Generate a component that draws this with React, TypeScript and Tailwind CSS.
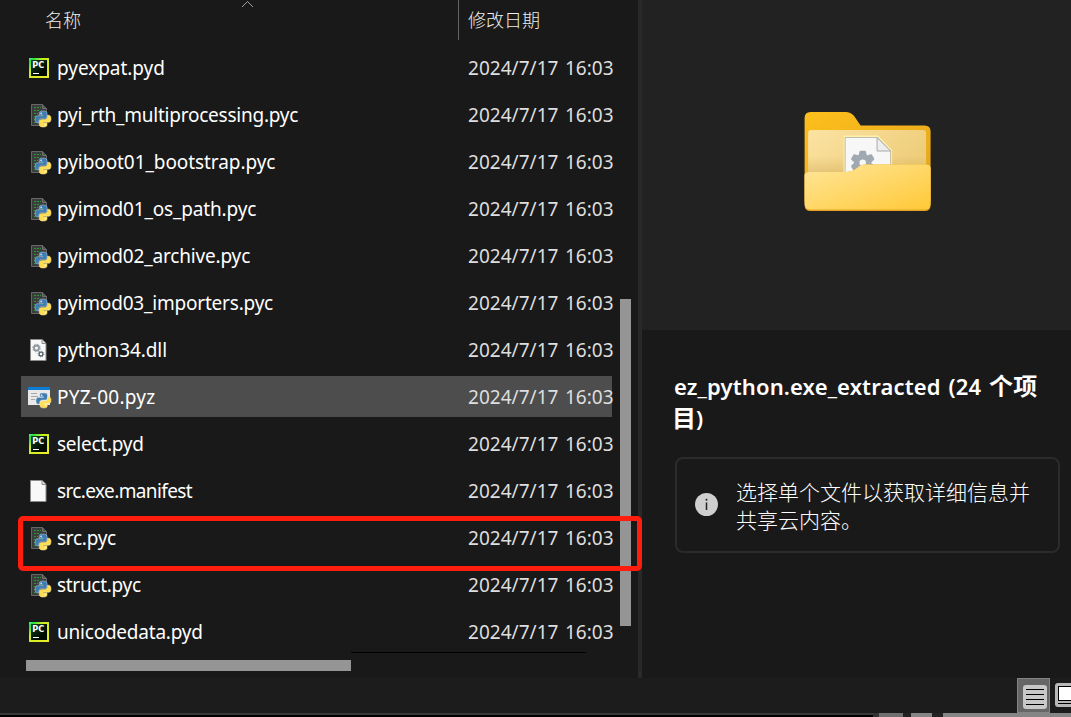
import React from "react";

type Kind = "pyd" | "pyc" | "dll" | "pyz" | "file";

const files: { name: string; kind: Kind; tracking: string }[] = [
  { name: "pyexpat.pyd", kind: "pyd", tracking: "tracking-[-0.05px]" },
  { name: "pyi_rth_multiprocessing.pyc", kind: "pyc", tracking: "tracking-[-0.24px]" },
  { name: "pyiboot01_bootstrap.pyc", kind: "pyc", tracking: "tracking-[-0.08px]" },
  { name: "pyimod01_os_path.pyc", kind: "pyc", tracking: "tracking-[-0.15px]" },
  { name: "pyimod02_archive.pyc", kind: "pyc", tracking: "tracking-[-0.17px]" },
  { name: "pyimod03_importers.pyc", kind: "pyc", tracking: "tracking-[-0.2px]" },
  { name: "python34.dll", kind: "dll", tracking: "tracking-[-0.1px]" },
  { name: "PYZ-00.pyz", kind: "pyz", tracking: "tracking-[0.25px]" },
  { name: "select.pyd", kind: "pyd", tracking: "tracking-[-0.25px]" },
  { name: "src.exe.manifest", kind: "file", tracking: "tracking-[-0.62px]" },
  { name: "src.pyc", kind: "pyc", tracking: "tracking-[-0.28px]" },
  { name: "struct.pyc", kind: "pyc", tracking: "tracking-[-0.3px]" },
  { name: "unicodedata.pyd", kind: "pyd", tracking: "tracking-[-0.22px]" },
];

function Snakes({ x, y, size }: { x: number; y: number; size: number }) {
  return (
    <g transform={`translate(${x} ${y}) scale(${size / 16})`}>
      <path
        d="M7.8 0C4.5 0 4.2 1.3 4.2 2.3V4H8v.7H2.4C1 4.7 0 6 0 8.2s1 3.6 2.3 3.6H4V9.9c0-1.5 1.2-2.5 2.5-2.5h3.5c1.3 0 2.1-.9 2.1-2.1V2.3C12.1.8 10.5 0 7.8 0Z"
        fill="#3f7cb0" stroke="#b9d2e6" strokeWidth=".5"
      />
      <path
        d="M8.4 16c3.3 0 3.6-1.3 3.6-2.3V12H8.2v-.7h5.6C15.2 11.3 16 10 16 7.8s-.8-3.6-2.1-3.6h-1.5v1.9c0 1.5-1.2 2.5-2.5 2.5H6.4c-1.3 0-2.1.9-2.1 2.1v3C4.3 15.2 5.7 16 8.4 16Z"
        fill="#ffdc50" stroke="#fff0a8" strokeWidth=".5"
      />
      <circle cx="6.1" cy="2.3" r=".8" fill="#fff" />
      <circle cx="10.1" cy="13.7" r=".8" fill="#fffbe0" />
    </g>
  );
}

function FileIcon({ kind }: { kind: Kind }) {
  if (kind === "pyd")
    return (
      <svg width="24" height="26" viewBox="0 0 24 26">
        <defs>
          <linearGradient id="pcEdge" x1="0" y1="0" x2="1" y2="1">
            <stop offset="0" stopColor="#50f5a0" />
            <stop offset=".12" stopColor="#20e040" />
            <stop offset=".35" stopColor="#c8ec20" />
            <stop offset="1" stopColor="#eeee28" />
          </linearGradient>
          <linearGradient id="pcFace" x1="0" y1="0" x2="1" y2="1">
            <stop offset="0" stopColor="#0c4520" />
            <stop offset=".7" stopColor="#020a04" />
          </linearGradient>
        </defs>
        <rect x="1" y="3" width="20" height="20" fill="url(#pcEdge)" />
        <rect x="3" y="5" width="16" height="16" fill="url(#pcFace)" />
        <text x="4.2" y="13.4" fontSize="8.5" fontWeight="700" fontFamily="DejaVu Sans" textLength="12" lengthAdjust="spacingAndGlyphs" fill="#fff">PC</text>
        <rect x="5" y="18" width="6" height="1" fill="#fff" />
      </svg>
    );
  if (kind === "pyc")
    return (
      <svg width="24" height="26" viewBox="0 0 24 26">
        <path d="M3.5 2.5h11l4 4v17h-15Z" fill="#3b3d3d" stroke="#666" />
        <path d="M14.5 2.5v4h4" fill="#555" stroke="#707070" />
        <path d="M6 5.5h7M6 8.5h6M6 11.5h4M6 14.5h2M6 17.5h3M6 20.5h4" stroke="#279a35" strokeDasharray="2 1" />
        <Snakes x={7} y={9} size={16} />
      </svg>
    );
  if (kind === "pyz")
    return (
      <svg width="24" height="26" viewBox="0 0 24 26">
        <rect x="0" y="3" width="22" height="18" fill="#e9e9e9" />
        <rect x="0" y="3" width="22" height="3" fill="#0b7dd2" />
        <path d="M3 9.5h6M3 12.5h7M3 15.5h4" stroke="#aaa" />
        <path d="M12 9.5h7" stroke="#aaa" />
        <Snakes x={8} y={9} size={15} />
      </svg>
    );
  return (
    <svg width="24" height="26" viewBox="0 0 24 26">
      <path d="M2.5 2.5h11.5l4 4v17h-15.5Z" fill="#f8f8f8" stroke="#8b8b8b" />
      <path d="M14 2.5v4h4" fill="#ddd" stroke="#8b8b8b" />
      {kind === "dll" && (
        <g fill="none">
          <circle cx="8.5" cy="11" r="2.5" stroke="#8e989f" strokeWidth="1.8" />
          <circle cx="8.5" cy="11" r="3.8" stroke="#8e989f" strokeDasharray="1.5 1.48" />
          <circle cx="13" cy="17" r="1.9" stroke="#56616b" strokeWidth="1.3" />
          <circle cx="13" cy="17" r="2.9" stroke="#56616b" strokeWidth=".8" strokeDasharray="1.1 1.18" />
        </g>
      )}
    </svg>
  );
}

function FolderIcon() {
  return (
    <svg width="128" height="102" viewBox="0.4 0 128 102">
      <defs>
        <linearGradient id="fBack" x1="0" y1="0" x2="1" y2="1">
          <stop offset="0" stopColor="#fdc01c" />
          <stop offset="1" stopColor="#e3a11b" />
        </linearGradient>
        <linearGradient id="fInner" x1="0" y1="0" x2="1" y2=".5">
          <stop offset="0" stopColor="#fce3a3" />
          <stop offset="1" stopColor="#edcd79" />
        </linearGradient>
        <linearGradient id="fFront" x1="0" y1="0" x2="1" y2="1">
          <stop offset="0" stopColor="#ffe69a" />
          <stop offset="1" stopColor="#ffc937" />
        </linearGradient>
        <linearGradient id="fShade" x1="0" y1="0" x2="0" y2="1">
          <stop offset="0" stopColor="#a87820" stopOpacity="0" />
          <stop offset="1" stopColor="#a87820" stopOpacity=".25" />
        </linearGradient>
      </defs>
      <path d="M1 7q0-6 6-6h35q5 0 8.5 4L57 14.5h64q6 0 6 6V90H1Z" fill="url(#fBack)" />
      <path d="M4.5 22q0-3 3-3h112q3 0 3 3v45H4.5Z" fill="url(#fInner)" />
      <path d="M4.5 45h118v20H4.5Z" fill="url(#fShade)" />
      <path d="M41 25.5h33l13.5 14V64H41Z" fill="#f7f7f8" stroke="#fff0ad" strokeWidth="2" />
      <path d="M41.5 64V26.5H74L87 40v22" fill="none" stroke="#b4aea0" strokeWidth=".8" />
      <path d="M73.5 26.5v13.5H87Z" fill="#eeeeef" stroke="#a9a9a9" />
      <g fill="#a0a9b2" transform="translate(59.1 51.7)">
        {[0, 60, 120, 180, 240, 300].map((angle) => (
          <path key={angle} d="M-4.5-6 -3.2-11.2q.2-.8 1-.8h4.4q.8 0 1 .8L4.5-6Z" transform={`rotate(${angle})`} />
        ))}
        <circle r="8.4" />
        <circle r="3.2" fill="#f7f7f8" />
      </g>
      <path d="M1 64q0-3 5-3h37q5 0 9-3l4-3q2-1.5 5-1.5h61q5 0 5 4V94q0 6-6 6H7q-6 0-6-6Z" fill="#e6a426" />
      <path d="M1 64q0-3 5-3h37q5 0 9-3l4-3q2-1.5 5-1.5h61q5 0 5 4V92.5q0 6-6 6H7q-6 0-6-6Z" fill="url(#fFront)" />
    </svg>
  );
}

export default function App() {
  return (
    <div className="relative flex h-[717px] w-[1071px] flex-col overflow-hidden bg-[#191919] font-['Noto_Sans','Noto_Sans_CJK_SC',sans-serif] text-white">
      <div className="flex h-[678px]">
        <div className="relative flex w-[638px] shrink-0 flex-col">
          <div className="flex h-10 text-[18px] font-light leading-[39px] text-[#eeeeee]">
            <div className="w-[458px] pl-[45px] font-['Noto_Sans_CJK_SC',sans-serif]">名称</div>
            <div className="border-l border-[#636363] pl-[9px] font-['Noto_Sans_CJK_SC',sans-serif]">修改日期</div>
          </div>
          <svg className="absolute left-[241px] top-0" width="13" height="9" viewBox="0 0 13 9">
            <path d="M1 7 6.5 1.5 12 7" fill="none" stroke="#a0a0a0" />
          </svg>
          <div className="flex w-[613px] flex-col gap-1.5 overflow-hidden pl-[21px] pt-[7px]">
            {files.map((file) => (
              <div
                key={file.name}
                className={`flex h-[41px] w-[591px] items-center whitespace-nowrap text-[19px] leading-[41px] ${file.kind === "pyz" ? "bg-[#4d4d4d]" : ""}`}
              >
                <div className="flex w-9 shrink-0 pl-[7px] pt-px">
                  <FileIcon kind={file.kind} />
                </div>
                <div className={`w-[411px] shrink-0 pt-px ${file.tracking}`}>{file.name}</div>
                <div className="w-[145px] shrink-0 overflow-hidden pt-px tracking-[0.03px] [word-spacing:1.5px] text-[#dedede]">2024/7/17 16:03</div>
              </div>
            ))}
          </div>
          <div className="absolute left-[620px] top-[299px] h-[327px] w-[11px] bg-[#959595]" />
          <div className="absolute left-[26px] top-[660px] h-[11px] w-[325px] bg-[#959595]" />
          <div className="absolute left-[351px] top-[652px] h-px w-[235px] bg-black" />
        </div>
        <div className="w-1 shrink-0 bg-[#292929]" />
        <div className="flex w-[429px] flex-col">
          <div className="h-[330px] bg-[#222222] pl-[162px] pt-[111px]">
            <FolderIcon />
          </div>
          <div className="pl-8 pt-[40px]">
            <div className="h-16 text-[22px] font-semibold leading-8 tracking-[0.14px]">
              <div className="h-8 whitespace-nowrap [word-spacing:2px]">
                ez_python.exe_extracted (24 <span className="text-[24px] font-bold">个项</span>
              </div>
              <div className="h-8">
                <span className="-ml-0.5 inline-block w-6 text-[24px] font-bold">目</span>)
              </div>
            </div>
            <div className="ml-px mt-[23px] flex h-[96px] w-[385px] items-center rounded-lg border-2 border-[#2b2b2b] pl-[18px]">
              <svg className="-mt-[2px]" width="23" height="23" viewBox="0 0 23 23">
                <circle cx="11.5" cy="11.5" r="11.5" fill="#cfcfcf" />
                <path d="M11.5 9.5V17" stroke="#222" strokeWidth="1.5" />
                <circle cx="11.5" cy="6.8" r="1" fill="#222" />
              </svg>
              <div className="ml-[18px] whitespace-nowrap font-['Noto_Sans_CJK_SC',sans-serif] text-[21px] font-light leading-7">
                选择单个文件以获取详细信息并
                <br />
                共享云内容。
              </div>
            </div>
          </div>
        </div>
      </div>
      <div className="flex h-[35px] bg-[#1c1c1c] pl-[1017px]">
        <div className="flex h-[35px] w-[33px] shrink-0 border border-[#858585] bg-[#666] pl-[5px] pt-[6px]">
          <svg width="24" height="24" viewBox="0 0 24 24">
            <rect width="24" height="24" rx="3" fill="#c8c8c8" />
            <path d="M3 4.5h18M3 9.5h18M3 14.5h18M3 19.5h18" stroke="#000" />
          </svg>
        </div>
        <svg className="ml-[5px] mt-[5px] shrink-0" width="16" height="24" viewBox="0 0 16 24">
          <rect width="24" height="24" rx="3" fill="#b8b8b8" />
          <rect x="3.5" y="3.5" width="20" height="14" fill="#fff" stroke="#000" />
          <path d="M3 20.5h18" stroke="#000" />
        </svg>
      </div>
      <div className="flex h-1">
        <div className="h-1 w-[873px] border-t-2 border-[#393939] bg-black" />
        <div className="h-1 w-[6px] bg-[#333]" />
        <div className="h-1 w-[24px] bg-[#707070]" />
        <div className="h-1 w-[8px] bg-[#222]" />
        <div className="h-1 w-[21px] bg-[#858585]" />
        <div className="h-1 w-[11px] bg-[#222]" />
        <div className="h-1 w-[128px] bg-[#858585]" />
      </div>
      <div className="absolute left-[18px] top-[516px] h-[55px] w-[624px] rounded-[5px] border-[5px] border-[#ff1d0d]" />
    </div>
  );
}
